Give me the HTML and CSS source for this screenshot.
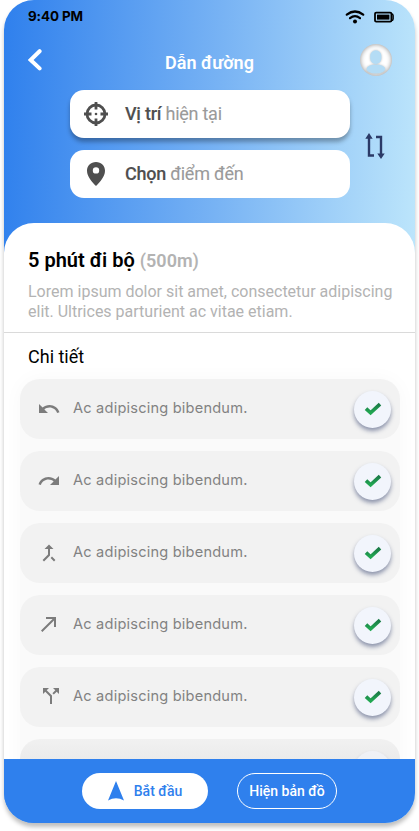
FILE: index.html
```html
<!DOCTYPE html>
<html lang="vi">
<head>
<meta charset="utf-8">
<title>Dẫn đường</title>
<link rel="stylesheet" href="styles.css">
</head>
<body>
<svg class="defs" width="0" height="0" aria-hidden="true">
  <defs>
    <linearGradient id="green" x1="0" y1="0" x2="0" y2="1"><stop offset="0" stop-color="#1b7a47"/><stop offset="1" stop-color="#22a852"/></linearGradient>
    <symbol id="check" viewBox="0 0 18 14"><path d="M2 6.6 L6.6 10.8 L16 2.2" fill="none" stroke="url(#green)" stroke-width="3.7"/></symbol>
  </defs>
</svg>
<main class="phone">
  <header class="header">
    <div class="status">
      <span class="time">9:40 PM</span>
      <svg class="wifi" width="20" height="14" viewBox="0 0 20 14"><g fill="none" stroke="#000" stroke-width="2.2" stroke-linecap="round"><path d="M1.8 4.7 Q10 -1.7 18.2 4.7"/><path d="M5 8.2 Q10 4.2 15 8.2"/></g><circle cx="10" cy="11.5" r="2" /></svg>
      <svg class="battery" width="20" height="12" viewBox="0 0 20 12"><rect x="1" y="1.6" width="16.4" height="9" rx="1.2" fill="none" stroke="#000" stroke-width="1.8"/><rect x="3" y="3.6" width="12.4" height="5"/><path d="M17.2 2.8 Q19.1 3 19.1 4.5 V8 Q19.1 9.6 17.2 9.8" fill="none" stroke="#000" stroke-width="1.5"/></svg>
    </div>
    <div class="titlebar">
      <svg class="back" width="14" height="22" viewBox="0 0 14 22"><path d="M11.6 2.2 L2.6 11 L11.6 19.4" fill="none" stroke="#fff" stroke-width="4" stroke-linecap="round"/></svg>
      <h1>Dẫn đường</h1>
      <div class="avatar"><svg width="32" height="32" viewBox="0 0 32 32"><rect x="10.2" y="6.3" width="11.2" height="13.6" rx="5.4"/><ellipse cx="15.9" cy="25" rx="9.4" ry="4.6"/></svg></div>
    </div>
    <div class="route">
      <div class="fields">
        <div class="field raised">
          <svg width="24" height="24" viewBox="0 0 24 24"><circle cx="12" cy="12" r="9" fill="none" stroke="#4f4f4f" stroke-width="2.8"/><path d="M12 0V7.5M12 16.5V24M0 12H7.5M16.5 12H24" stroke="#4f4f4f" stroke-width="2.8"/><circle cx="12" cy="12" r="1.3" fill="#4f4f4f"/></svg>
          <p><b>Vị trí</b> hiện tại</p>
        </div>
        <div class="field">
          <svg width="24" height="24" viewBox="0 0 24 24"><path d="M12 0C6.8 0 3 3.8 3 8.7C3 14.5 8 20 12 24C16 20 21 14.5 21 8.7C21 3.8 17.2 0 12 0ZM12 5.2A3.2 3.2 0 1 1 12 11.6A3.2 3.2 0 1 1 12 5.2Z" fill="#4f4f4f" fill-rule="evenodd"/></svg>
          <p><b>Chọn</b> điểm đến</p>
        </div>
      </div>
      <svg class="swap" width="20" height="26" viewBox="0 0 20 26"><g fill="none" stroke="#2b3a67" stroke-width="2.4"><path d="M4 5V22.5H9"/><path d="M11 4H16V21"/></g><path d="M.3 5.8L4 0L7.7 5.8ZM12.3 20.4L16 26L19.7 20.4Z" fill="#2b3a67"/></svg>
    </div>
  </header>
  <section class="sheet">
    <div class="summary">
      <h2>5 phút đi bộ <span>(500m)</span></h2>
      <p>Lorem ipsum dolor sit amet, consectetur adipiscing elit. Ultrices parturient ac vitae etiam.</p>
    </div>
    <h3>Chi tiết</h3>
    <ul class="steps">
      <li><svg class="dir" viewBox="0 0 24 24"><path d="M12.5 8c-2.65 0-5.05.99-6.9 2.6L2 7v9h9l-3.62-3.62c1.39-1.16 3.16-1.88 5.12-1.88 3.54 0 6.55 2.31 7.6 5.5l2.37-.78C21.08 11.03 17.15 8 12.5 8z"/></svg><span>Ac adipiscing bibendum.</span><i><svg width="18" height="14"><use href="#check"/></svg></i></li>
      <li><svg class="dir" viewBox="0 0 24 24"><path d="M18.4 10.6C16.55 8.99 14.15 8 11.5 8c-4.65 0-8.58 3.03-9.96 7.22L3.9 16c1.05-3.19 4.05-5.5 7.6-5.5 1.95 0 3.73.72 5.12 1.88L13 16h9V7l-3.6 3.6z"/></svg><span>Ac adipiscing bibendum.</span><i><svg width="18" height="14"><use href="#check"/></svg></i></li>
      <li><svg class="dir" viewBox="0 0 24 24"><path d="M17 20.41L18.41 19 15 15.59 13.59 17 17 20.41zM7.5 8H11v5.59L5.59 19 7 20.41l6-6V8h3.5L12 3.5 7.5 8z"/></svg><span>Ac adipiscing bibendum.</span><i><svg width="18" height="14"><use href="#check"/></svg></i></li>
      <li><svg class="dir diagonal" viewBox="0 0 24 24"><path d="M9 5v2h6.59L4 18.59 5.41 20 17 8.41V15h2V5z"/></svg><span>Ac adipiscing bibendum.</span><i><svg width="18" height="14"><use href="#check"/></svg></i></li>
      <li><svg class="dir fork" viewBox="0 0 24 24"><path d="M14 4l2.29 2.29-2.88 2.88 1.42 1.42 2.88-2.88L20 10V4zm-4 0H4v6l2.29-2.29 4.71 4.7V20h2v-8.41l-5.29-5.3z"/></svg><span>Ac adipiscing bibendum.</span><i><svg width="18" height="14"><use href="#check"/></svg></i></li>
      <li class="cut"><svg class="dir" viewBox="0 0 24 24"></svg><span></span><i></i></li>
    </ul>
  </section>
  <footer class="actions">
    <button class="start"><svg width="16" height="20" viewBox="0 0 16 20"><path d="M8 0L16 19.5Q8 15 0 19.5Z" fill="#2f80ed"/></svg>Bắt đầu</button>
    <button class="map">Hiện bản đồ</button>
  </footer>
</main>
</body>
</html>
```
FILE: styles.css
```css
* { box-sizing: border-box; margin: 0; padding: 0; }
body { height: 831px; overflow: hidden; background: #fff; font-family: Roboto, sans-serif; }
.defs { display: block; height: 0; }
svg { display: block; flex: none; }
.phone {
  width: 411px; height: 823px; margin-left: 4px;
  display: flex; flex-direction: column; overflow: hidden;
  border-radius: 30px; background: linear-gradient(92deg, #2f80ed, #78b3f4 50%, #c3eafc);
  box-shadow: 0 4px 4px rgba(0,0,0,.25);
}
.header { height: 223px; flex: none; }
.status { height: 32px; padding: 0 21px 0 24px; display: flex; align-items: center; }
.time { font: 700 13.4px/32px Inter, sans-serif; letter-spacing: -.1px; flex: 1; }
.wifi { margin: 2px 9px 0 0; }
.battery { margin-top: 2px; }
.titlebar { height: 58px; padding: 12px 23px 0 24px; display: flex; align-items: flex-start; justify-content: space-between; }
.back { margin-top: 5px; }
.titlebar h1 { font-size: 18px; line-height: 22px; font-weight: 600; color: #fff; margin: 8px 0 0 17px; }
.avatar { width: 32px; height: 32px; border-radius: 50%; background: #fff; box-shadow: inset 0 0 5px rgba(0,0,0,.45); }
.avatar svg { fill: #b4dcf5; filter: drop-shadow(0 0 1px rgba(0,0,0,.25)); }
.route { display: flex; align-items: flex-start; padding-left: 66px; }
.fields { display: grid; gap: 12px; }
.field { width: 280px; height: 48px; border-radius: 14px; background: #fff; display: flex; align-items: center; gap: 17px; padding-left: 14px; font-size: 18px; line-height: 24px; color: #9a9a9a; letter-spacing: -.25px; }
.field p { -webkit-text-stroke: .1px; }
.field b { color: #4f4f4f; font-weight: 500; }
.raised { box-shadow: 0 4px 4px rgba(0,0,0,.3); }
.swap { margin: 43px 0 0 15px; }
.sheet { height: 536px; flex: none; overflow: hidden; border-radius: 30px 30px 0 0; background: #fff; }
.summary { height: 110px; padding: 25px 15px 0 24px; border-bottom: 1px solid #dadada; }
.summary h2 { font-size: 20px; line-height: 24px; font-weight: 600; color: #000; }
.summary h2 span { font-size: 18px; color: #b3b3b3; }
.summary p { margin-top: 9px; font-size: 16px; line-height: 20px; color: #b3b3b3; }
.sheet h3 { font-size: 18px; line-height: 24px; font-weight: 400; padding: 12px 24px 0; height: 46px; }
.steps { list-style: none; display: grid; gap: 12px; width: 380px; margin-left: 16px; box-shadow: 0 0 20px rgba(0,0,0,.03); border-radius: 20px; background: #fafafa; }
.steps li { height: 60px; border-radius: 20px; background: #f2f2f2; display: flex; align-items: center; padding: 0 9px 0 17px; }
.steps .cut { background: linear-gradient(#f1f1f1, #ebebeb 20px); }
.cut i { opacity: .6; }
.dir { width: 24px; height: 24px; fill: #7c7c7c; }
.diagonal { margin-top: -2px; }
.fork { margin-left: 2px; margin-right: -2px; margin-top: -2px; }
.steps span { font: 400 14.6px/20px Inter, sans-serif; letter-spacing: .2px; color: #828282; margin: -2px 0 0 12px; flex: 1; }
.steps i { width: 37px; height: 37px; border-radius: 50%; background: #f2f5fc; display: grid; place-items: center; box-shadow: 0 3px 4px rgba(43,58,103,.5); }
.actions { height: 64px; background: #2f80ed; display: flex; gap: 29px; padding: 14px 0 0 78px; }
.actions button { height: 36px; border-radius: 18px; font: 500 14px/18px Roboto, sans-serif; display: flex; align-items: center; justify-content: center; }
.start { width: 126px; border: 0; background: #fff; color: #2f80ed; gap: 10px; }
.map { width: 100px; border: 1px solid #fff; background: none; color: #fff; }
```
